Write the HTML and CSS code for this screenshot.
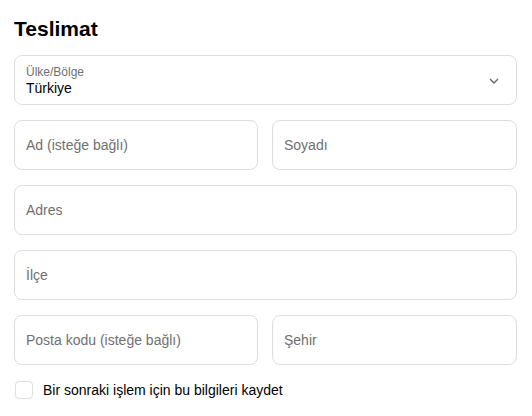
FILE: index.html
```html
<!DOCTYPE html>
<html lang="tr">
<head>
<meta charset="utf-8">
<link rel="stylesheet" href="styles.css">
</head>
<body>
<section class="delivery">
  <h2 class="title">Teslimat</h2>
  <div class="field select">
    <div class="select-text">
      <span class="select-label">Ülke/Bölge</span>
      <span class="select-value">Türkiye</span>
    </div>
    <svg class="chevron" width="10" height="6" viewBox="0 0 10 6"><path d="M1 1l4 4 4-4" fill="none" stroke="#666" stroke-width="1.4"/></svg>
  </div>
  <div class="row">
    <div class="field"><span class="ph">Ad (isteğe bağlı)</span></div>
    <div class="field"><span class="ph">Soyadı</span></div>
  </div>
  <div class="field"><span class="ph">Adres</span></div>
  <div class="field"><span class="ph">İlçe</span></div>
  <div class="row">
    <div class="field"><span class="ph">Posta kodu (isteğe bağlı)</span></div>
    <div class="field"><span class="ph">Şehir</span></div>
  </div>
  <label class="check">
    <span class="box"></span>
    <span class="check-text">Bir sonraki işlem için bu bilgileri kaydet</span>
  </label>
</section>
</body>
</html>
```
FILE: styles.css
```css
* { box-sizing: border-box; }
html, body { margin: 0; background: #fff; }
body {
  font-family: "Liberation Sans", Arial, sans-serif;
  color: #000;
  padding: 0 15px 0 14px;
}
.delivery {
  display: flex;
  flex-direction: column;
  gap: 15px;
  width: 503px;
}
.title {
  margin: 17px 0 -1px;
  font-size: 21px;
  font-weight: 700;
  line-height: 24px;
}
.field {
  height: 50px;
  border: 1px solid #dedede;
  border-radius: 8px;
  display: flex;
  align-items: center;
  padding: 0 11px;
}
.ph {
  font-size: 14px;
  color: #707070;
}
.row {
  display: grid;
  grid-template-columns: 244px 245px;
  gap: 14px;
}
.select {
  justify-content: space-between;
  padding-right: 17px;
}
.select-text {
  display: flex;
  flex-direction: column;
  padding-top: 1px;
}
.select-label {
  font-size: 12px;
  color: #707070;
  line-height: 14px;
}
.select-value {
  font-size: 14px;
  line-height: 18px;
}
.chevron { display: block; margin-top: 1px; }
.check {
  display: flex;
  align-items: center;
  gap: 10px;
  margin-top: 1px;
  padding-left: 1px;
}
.box {
  width: 18px;
  height: 18px;
  border: 1px solid #dedede;
  border-radius: 4px;
}
.check-text { font-size: 14px; }
```
